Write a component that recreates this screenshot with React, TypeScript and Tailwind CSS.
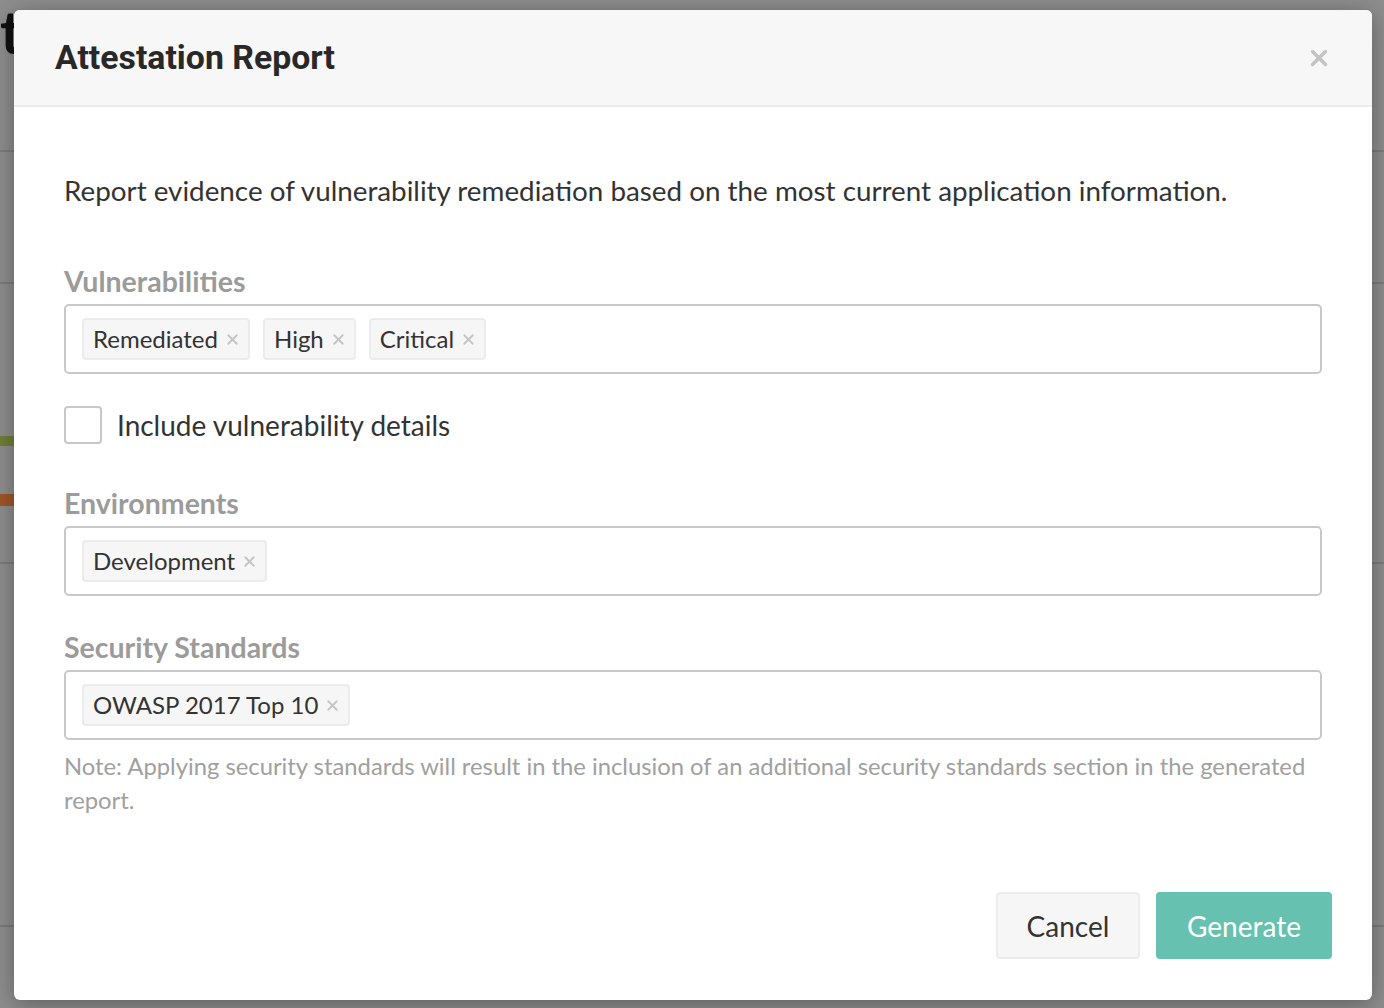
import { X } from 'lucide-react'

type Field = {
  label: string
  tags: string[]
}

function Tag({ text }: { text: string }) {
  return (
    <span className="flex h-[42px] items-center gap-[6px] rounded-[4px] border-2 border-[#ececec] bg-[#f6f6f6] pl-[9px] pr-[7px] text-[24px] text-[#333]">
      {text}
      <X className="h-[17px] w-[17px] text-[#c4c4c4]" strokeWidth={2.6} />
    </span>
  )
}

function TagField({ label, tags }: Field) {
  return (
    <div className="flex flex-col gap-[6px]">
      <div className="text-[28.5px] font-bold leading-[34px] text-[#9b9b9b]">{label}</div>
      <div className="flex h-[70px] items-center gap-[13px] rounded-[5px] border-2 border-[#c8c8c8] px-[16px]">
        {tags.map((t) => (
          <Tag key={t} text={t} />
        ))}
      </div>
    </div>
  )
}

export default function App() {
  return (
    <div className="relative h-[1008px] w-[1384px] overflow-hidden bg-[#8e8e8e] font-['Lato','Noto_Sans',sans-serif]">
      {/* Page behind the overlay */}
      <div className="absolute left-0 top-[-14px] text-[60px] font-bold text-[#111]">t</div>
      <div className="absolute left-0 top-[150px] h-[2px] w-[1384px] bg-[#7c7c7c]" />
      <div className="absolute left-0 top-[282px] h-[2px] w-[1384px] bg-[#7c7c7c]" />
      <div className="absolute left-0 top-[436px] h-[10px] w-[14px] bg-[#6f7f35]" />
      <div className="absolute left-0 top-[494px] h-[12px] w-[14px] bg-[#a0562a]" />
      <div className="absolute left-0 top-[562px] h-[2px] w-[1384px] bg-[#7c7c7c]" />
      <div className="absolute left-0 top-[925px] h-[2px] w-[1384px] bg-[#7c7c7c]" />

      {/* Modal */}
      <div className="absolute left-[14px] top-[10px] flex h-[990px] w-[1358px] flex-col overflow-hidden rounded-[6px] bg-white shadow-[0_4px_24px_rgba(0,0,0,0.35)]">
        <div className="flex h-[97px] shrink-0 items-center justify-between border-b-2 border-[#ececec] bg-[#f7f7f7] pl-[41px] pr-[40px]">
          <h2 className="pt-[2px] font-['Roboto',sans-serif] text-[33.8px] font-bold text-[#282828]">
            Attestation Report
          </h2>
          <X className="h-[26px] w-[26px] text-[#c3c3c3]" strokeWidth={3.2} />
        </div>

        <div className="flex flex-1 flex-col px-[50px] pt-[67px]">
          <p className="text-[27.8px] leading-[34px] text-[#333]">
            Report evidence of vulnerability remediation based on the most current application information.
          </p>

          <div className="mt-[56px]">
            <TagField label="Vulnerabilities" tags={['Remediated', 'High', 'Critical']} />
          </div>

          <label className="mt-[32px] flex items-center gap-[15px]">
            <span className="h-[38px] w-[38px] rounded-[4px] border-2 border-[#c8c8c8] bg-white" />
            <span className="text-[28px] leading-[34px] text-[#333]">Include vulnerability details</span>
          </label>

          <div className="mt-[42px]">
            <TagField label="Environments" tags={['Development']} />
          </div>

          <div className="mt-[34px]">
            <TagField label="Security Standards" tags={['OWASP 2017 Top 10']} />
          </div>

          <p className="mt-[9px] text-[23.8px] leading-[34px] text-[#a0a0a0]">
            Note: Applying security standards will result in the inclusion of an additional security standards section in the generated report.
          </p>

          <div className="mt-auto mb-[41px] mr-[-10px] flex justify-end gap-[16px]">
            <button className="h-[67px] w-[144px] rounded-[4px] border-2 border-[#ececec] bg-[#f6f6f6] text-[28px] text-[#333]">
              Cancel
            </button>
            <button className="h-[67px] w-[176px] rounded-[4px] bg-[#66c1b1] text-[28px] text-white">
              Generate
            </button>
          </div>
        </div>
      </div>
    </div>
  )
}
